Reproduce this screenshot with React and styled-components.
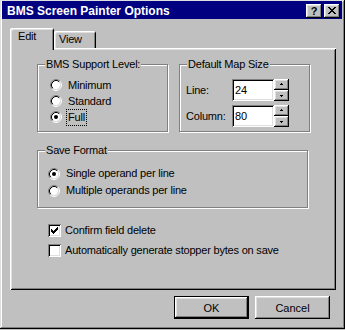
import React from "react";
import styled, { createGlobalStyle } from "styled-components";

const Global = createGlobalStyle`
  html, body { margin: 0; padding: 0; background: #c0c0c0; }
  body {
    font-family: "Liberation Sans", Arial, sans-serif;
    font-size: 11px;
    letter-spacing: -0.2px;
    color: #000;
  }
`;

const raised = `box-shadow: inset -1px -1px #000, inset 1px 1px #fff, inset -2px -2px #808080, inset 2px 2px #dfdfdf;`;
const sunken = `box-shadow: inset 1px 1px #808080, inset -1px -1px #fff, inset 2px 2px #000, inset -2px -2px #dfdfdf;`;

const Window = styled.div`
  width: 345px;
  height: 329px;
  box-sizing: border-box;
  padding: 1px 3px 3px 2px;
  background: #c0c0c0;
  box-shadow: inset -1px -1px #000, inset 1px 1px #dfdfdf, inset -2px -2px #808080, inset 2px 2px #fff;
  display: flex;
  flex-direction: column;
`;

const TitleBar = styled.div`
  height: 18px;
  background: #000080;
  color: #fff;
  display: flex;
  align-items: center;
  justify-content: space-between;
  padding: 0 2px 0 5px;
`;

const Title = styled.span`
  font-weight: bold;
  font-size: 12px;
  letter-spacing: 0;
  line-height: 14px;
  padding-top: 1px;
`;

const TitleButtons = styled.div`
  display: flex;
  gap: 2px;
  padding-top: 1px;
`;

const TitleButton = styled.div`
  width: 16px;
  height: 14px;
  box-sizing: border-box;
  background: #c0c0c0;
  color: #000;
  ${raised}
  display: flex;
  align-items: center;
  justify-content: center;
  font-weight: bold;
  font-size: 11px;
  letter-spacing: 0;
  line-height: 12px;
`;

const Body = styled.div`
  padding: 9px 6px 0 8px;
  display: flex;
  flex-direction: column;
`;

const TabStrip = styled.div`
  height: 20px;
  display: flex;
  align-items: flex-end;
`;

const Tab = styled.div`
  position: relative;
  z-index: ${(p) => (p.$active ? 1 : 0)};
  width: ${(p) => p.$w}px;
  height: ${(p) => (p.$active ? 22 : 17)}px;
  margin-bottom: ${(p) => (p.$active ? -2 : 0)}px;
  box-sizing: border-box;
  padding: 2px 0 0 ${(p) => p.$pad}px;
  line-height: 13px;
  background: #c0c0c0;
  border-radius: 2px 2px 0 0;
  box-shadow: inset 1px 1px #fff, inset -1px 0 #000, inset 2px 2px #dfdfdf, inset -2px 0 #808080;
`;

const Panel = styled.div`
  height: 242px;
  box-sizing: border-box;
  padding: 16px 0 0 27px;
  box-shadow: inset 1px 1px #fff, inset -1px -1px #000, inset 2px 2px #dfdfdf, inset -2px -2px #808080;
  display: flex;
  flex-direction: column;
`;

const GroupRow = styled.div`
  display: flex;
  gap: 11px;
`;

const Group = styled.div`
  position: relative;
  width: ${(p) => p.$w}px;
  height: ${(p) => p.$h}px;
  margin-top: ${(p) => p.$mt || 0}px;
  box-sizing: border-box;
  border: 1px solid #808080;
  box-shadow: 1px 1px 0 #fff, inset 1px 1px 0 #fff;
  padding: ${(p) => p.$pad};
  display: flex;
  flex-direction: column;
`;

const Legend = styled.span`
  position: absolute;
  top: -7px;
  left: 7px;
  padding: 0 1px;
  line-height: 13px;
  background: #c0c0c0;
`;

const OptionRow = styled.div`
  height: ${(p) => p.$h}px;
  display: flex;
  align-items: center;
  gap: ${(p) => p.$gap}px;
`;

const OptionLabel = styled.span`
  line-height: 13px;
  border: 1px dotted ${(p) => (p.$focus ? "#000" : "transparent")};
  padding: 1px 1px;
  margin-left: -2px;
`;

const MapRow = styled.div`
  height: 22px;
  display: flex;
  align-items: center;
  & + & { margin-top: 4px; }
`;

const FieldLabel = styled.span`
  width: 46px;
`;

const Field = styled.div`
  width: 42px;
  height: 22px;
  box-sizing: border-box;
  padding-left: 3px;
  background: #fff;
  ${sunken}
  display: flex;
  align-items: center;
  letter-spacing: 0;
`;

const Spinner = styled.div`
  width: 15px;
  height: 22px;
  display: flex;
  flex-direction: column;
`;

const SpinButton = styled.div`
  flex: 1;
  background: #c0c0c0;
  ${raised}
  display: flex;
  align-items: center;
  justify-content: center;
`;

const CheckList = styled.div`
  margin-top: 14px;
  padding-left: 11px;
  display: flex;
  flex-direction: column;
  gap: 4px;
`;

const Box = styled.span`
  width: 13px;
  height: 13px;
  flex: none;
  background: #fff;
  ${sunken}
  display: flex;
`;

const ButtonRow = styled.div`
  margin-top: 6px;
  padding-right: 6px;
  display: flex;
  justify-content: flex-end;
  gap: 6px;
`;

const PushButton = styled.div`
  width: 75px;
  height: 23px;
  box-sizing: border-box;
  border: ${(p) => (p.$default ? "1px solid #000" : "none")};
  ${raised}
  display: flex;
  align-items: center;
  justify-content: center;
  letter-spacing: 0;
`;

const Radio = ({ checked }) => (
  <svg width="12" height="12" viewBox="0 0 12 12" style={{ flex: "none" }}>
    <circle cx="6" cy="6" r="4.2" fill="#fff" />
    <path d="M2.11 9.89 A5.5 5.5 0 0 1 9.89 2.11" stroke="#808080" fill="none" />
    <path d="M9.89 2.11 A5.5 5.5 0 0 1 2.11 9.89" stroke="#fff" fill="none" />
    <path d="M2.82 9.18 A4.5 4.5 0 0 1 9.18 2.82" stroke="#000" fill="none" />
    <path d="M9.18 2.82 A4.5 4.5 0 0 1 2.82 9.18" stroke="#dfdfdf" fill="none" />
    {checked && <circle cx="6" cy="6" r="2" fill="#000" />}
  </svg>
);

const checkPixels = [
  [9, 3, 1], [8, 4, 2], [3, 5, 1], [7, 5, 3], [3, 6, 2], [6, 6, 3],
  [3, 7, 5], [4, 8, 3], [5, 9, 1],
];

const CheckBox = ({ checked }) => (
  <Box>
    {checked && (
      <svg width="13" height="13" viewBox="0 0 13 13" shapeRendering="crispEdges">
        {checkPixels.map(([x, y, w], i) => (
          <rect key={i} x={x} y={y} width={w} height="1" fill="#000" />
        ))}
      </svg>
    )}
  </Box>
);

const closePixels = [
  [4, 3, 2], [10, 3, 2], [5, 4, 2], [9, 4, 2], [6, 5, 4], [7, 6, 2],
  [6, 7, 4], [5, 8, 2], [9, 8, 2], [4, 9, 2], [10, 9, 2],
];

const CloseIcon = () => (
  <svg width="16" height="14" viewBox="0 0 16 14" shapeRendering="crispEdges">
    {closePixels.map(([x, y, w], i) => (
      <rect key={i} x={x} y={y} width={w} height="1" fill="#000" />
    ))}
  </svg>
);

const Arrow = ({ up }) => (
  <svg width="5" height="3" viewBox="0 0 5 3" shapeRendering="crispEdges">
    {up ? (
      <>
        <rect x="2" y="0" width="1" height="1" fill="#000" />
        <rect x="1" y="1" width="3" height="1" fill="#000" />
      </>
    ) : (
      <>
        <rect x="1" y="1" width="3" height="1" fill="#000" />
        <rect x="2" y="2" width="1" height="1" fill="#000" />
      </>
    )}
  </svg>
);

const SpinField = ({ label, value }) => (
  <MapRow>
    <FieldLabel>{label}</FieldLabel>
    <Field>{value}</Field>
    <Spinner>
      <SpinButton><Arrow up /></SpinButton>
      <SpinButton><Arrow /></SpinButton>
    </Spinner>
  </MapRow>
);

export default function App() {
  const levels = ["Minimum", "Standard", "Full"];
  return (
    <>
      <Global />
      <Window>
        <TitleBar>
          <Title>BMS Screen Painter Options</Title>
          <TitleButtons>
            <TitleButton>?</TitleButton>
            <TitleButton><CloseIcon /></TitleButton>
          </TitleButtons>
        </TitleBar>
        <Body>
          <TabStrip>
            <Tab $active $w={44} $pad={8}>Edit</Tab>
            <Tab $w={42} $pad={5}>View</Tab>
          </TabStrip>
          <Panel>
            <GroupRow>
              <Group $w={131} $h={68} $pad="12px 0 0 12px">
                <Legend>BMS Support Level:</Legend>
                {levels.map((l) => (
                  <OptionRow key={l} $h={16} $gap={6}>
                    <Radio checked={l === "Full"} />
                    <OptionLabel $focus={l === "Full"}>{l}</OptionLabel>
                  </OptionRow>
                ))}
              </Group>
              <Group $w={131} $h={68} $pad="14px 0 0 6px">
                <Legend>Default Map Size</Legend>
                <SpinField label="Line:" value="24" />
                <SpinField label="Column:" value="80" />
              </Group>
            </GroupRow>
            <Group $w={271} $h={58} $mt={18} $pad="14px 0 0 10px">
              <Legend>Save Format</Legend>
              <OptionRow $h={17} $gap={6}>
                <Radio checked />
                <OptionLabel>Single operand per line</OptionLabel>
              </OptionRow>
              <OptionRow $h={17} $gap={6}>
                <Radio />
                <OptionLabel>Multiple operands per line</OptionLabel>
              </OptionRow>
            </Group>
            <CheckList>
              <OptionRow $h={16} $gap={4}>
                <CheckBox checked />
                <span>Confirm field delete</span>
              </OptionRow>
              <OptionRow $h={16} $gap={4}>
                <CheckBox />
                <span>Automatically generate stopper bytes on save</span>
              </OptionRow>
            </CheckList>
          </Panel>
          <ButtonRow>
            <PushButton $default>OK</PushButton>
            <PushButton>Cancel</PushButton>
          </ButtonRow>
        </Body>
      </Window>
    </>
  );
}
